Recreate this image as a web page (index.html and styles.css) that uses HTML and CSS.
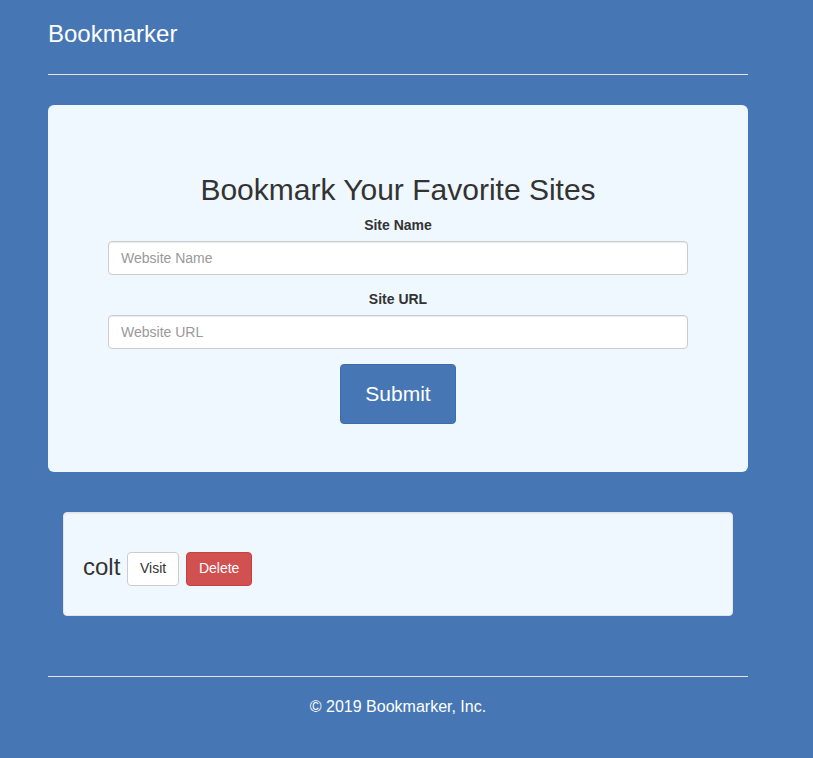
FILE: index.html
```html
<!DOCTYPE html>
<html lang="en">
<head>
<meta charset="utf-8">
<title>Bookmarker</title>
<link rel="stylesheet" href="styles.css">
</head>
<body>
<div class="container">
  <header class="header">
    <h3 class="brand">Bookmarker</h3>
  </header>

  <section class="jumbotron">
    <h2 class="title">Bookmark Your Favorite Sites</h2>
    <form class="form">
      <div class="form-group">
        <label class="label" for="siteName">Site Name</label>
        <input class="form-control" id="siteName" type="text" placeholder="Website Name">
      </div>
      <div class="form-group">
        <label class="label" for="siteUrl">Site URL</label>
        <input class="form-control" id="siteUrl" type="text" placeholder="Website URL">
      </div>
      <button type="button" class="btn btn-primary">Submit</button>
    </form>
  </section>

  <div class="results">
    <div class="well">
      <h3 class="bookmark">colt <a class="btn btn-default" href="#">Visit</a> <a class="btn btn-danger" href="#">Delete</a></h3>
    </div>
  </div>

  <footer class="footer">
    <p class="copy">&copy; 2019 Bookmarker, Inc.</p>
  </footer>
</div>
</body>
</html>
```

FILE: styles.css
```css
* { box-sizing: border-box; }

html, body {
  margin: 0;
  padding: 0;
}

body {
  background: #4677b4;
  font-family: "Liberation Sans", Arial, Helvetica, sans-serif;
  font-size: 14px;
  line-height: 1.42857;
  color: #333;
}

.container {
  width: 700px;
  margin-left: 48px;
  padding-top: 14px;
}

.header {
  padding-bottom: 20px;
  border-bottom: 1px solid #e5e5e5;
}

.brand {
  margin: 0;
  font-size: 24px;
  font-weight: normal;
  line-height: 40px;
  color: #fff;
}

.jumbotron {
  margin-top: 30px;
  background: #f0f8ff;
  border-radius: 6px;
  padding: 48px 60px;
  text-align: center;
}

.title {
  margin: 20px 0 10px;
  font-size: 30px;
  font-weight: normal;
  line-height: 1.1;
  color: #333;
}

.form-group {
  margin-bottom: 15px;
}

.label {
  display: inline-block;
  margin-bottom: 5px;
  font-weight: bold;
  font-size: 14px;
}

.form-control {
  display: block;
  width: 100%;
  height: 34px;
  padding: 6px 12px;
  font-family: inherit;
  font-size: 14px;
  line-height: 1.42857;
  color: #555;
  background: #fff;
  border: 1px solid #ccc;
  border-radius: 4px;
  box-shadow: inset 0 1px 1px rgba(0,0,0,.075);
}

.form-control::placeholder {
  color: #999;
}

.btn {
  display: inline-block;
  padding: 6px 12px;
  font-family: inherit;
  font-size: 14px;
  line-height: 1.42857;
  text-align: center;
  vertical-align: middle;
  border: 1px solid transparent;
  border-radius: 4px;
  text-decoration: none;
  cursor: pointer;
}

.btn-primary {
  padding: 14px 24px;
  font-size: 21px;
  color: #fff;
  background: #4677b4;
  border-color: #3f6ca6;
}

.btn-default {
  color: #333;
  background: #fff;
  border-color: #ccc;
}

.btn-danger {
  color: #fff;
  background: #d15050;
  border-color: #c9403c;
}

.results {
  margin-top: 40px;
  padding: 0 15px;
}

.well {
  background: #f0f8ff;
  border: 1px solid #e3e3e3;
  border-radius: 4px;
  padding: 19px;
  box-shadow: inset 0 1px 1px rgba(0,0,0,.05);
}

.bookmark {
  margin: 20px 0 10px;
  font-size: 24px;
  font-weight: normal;
  line-height: 1.1;
  color: #333;
}

.footer {
  margin-top: 60px;
  padding-top: 19px;
  border-top: 1px solid #e5e5e5;
  text-align: center;
  color: #fff;
}

.copy {
  margin: 0 0 10px;
  font-size: 16px;
}
```
